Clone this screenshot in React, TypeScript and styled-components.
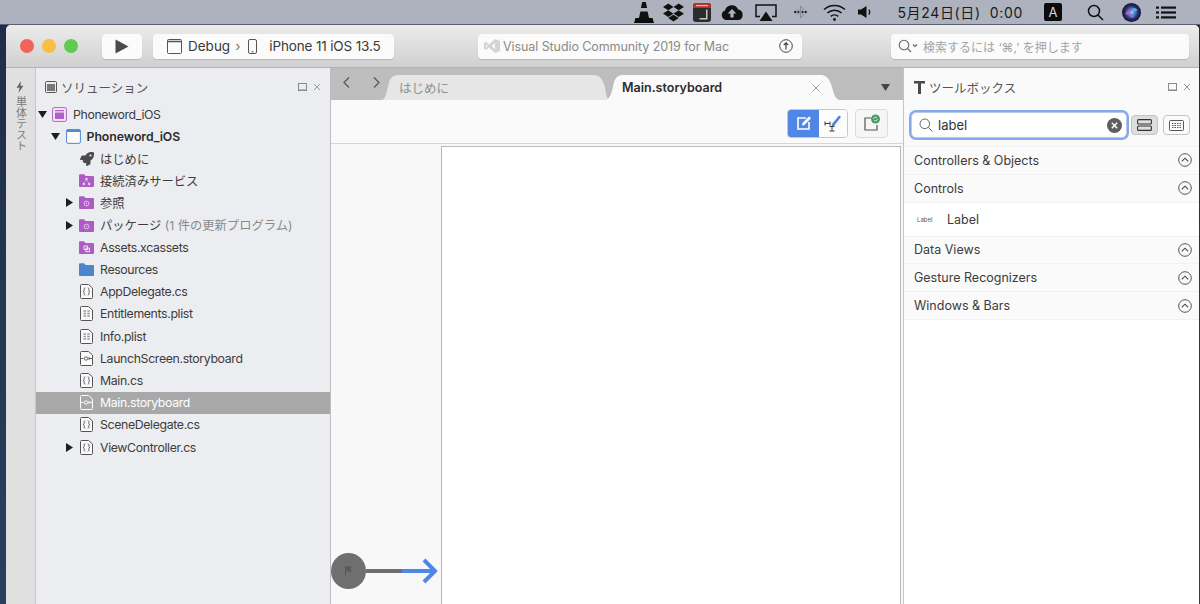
import * as React from 'react';
import styled, { createGlobalStyle } from 'styled-components';
import { FaDropbox, FaRocket } from 'react-icons/fa';

const SANS = `Inter, "Noto Sans CJK JP", "Liberation Sans", sans-serif`;

const Global = createGlobalStyle`
  html, body { margin: 0; padding: 0; height: 604px; overflow: hidden; background: #1f2f4d; }
  * { box-sizing: border-box; }
  #root { height: 604px; }
`;

export default function App() {
  return (
    <>
      <Global />
      <Screen>
        <MenuBar />
        <Desktop>
          <Window>
            <TitleBar />
            <Body>
              <Rail>
                <BoltIcon />
                <RailLabel>単体テスト</RailLabel>
              </Rail>
              <SolutionPanel />
              <EditorPane />
              <Toolbox />
            </Body>
          </Window>
        </Desktop>
      </Screen>
    </>
  );
}

/* ---------- menu bar ---------- */

const MenuBar = () => (
  <MenuStrip>
    <MenuSlot $w={30}><VlcIcon /></MenuSlot>
    <MenuSlot $w={28}><FaDropbox size={21} color="#111" /></MenuSlot>
    <MenuSlot $w={30}><CalIcon /></MenuSlot>
    <MenuSlot $w={30}><CloudIcon /></MenuSlot>
    <MenuSlot $w={38}><AirplayIcon /></MenuSlot>
    <MenuSlot $w={30}><BluetoothIcon /></MenuSlot>
    <MenuSlot $w={38}><WifiIcon /></MenuSlot>
    <MenuSlot $w={24}><SpeakerIcon /></MenuSlot>
    <Clock>5月24日(日)&nbsp;&nbsp;0:00</Clock>
    <MenuSlot $w={20}><InputBadge>A</InputBadge></MenuSlot>
    <MenuSlot $w={42} $gap={11}><MenuSearch /></MenuSlot>
    <MenuSlot $w={30}><SiriIcon /></MenuSlot>
    <MenuSlot $w={40}><ListIcon /></MenuSlot>
    <MenuEnd />
  </MenuStrip>
);

const MenuStrip = styled.div`
  height: 25px;
  flex: none;
  background: #adb2be;
  display: flex;
  align-items: center;
  justify-content: flex-end;
  border-bottom: 1px solid #5a6070;
`;

const MenuSlot = styled.div<{ $w: number; $gap?: number }>`
  width: ${(p) => p.$w}px;
  margin-left: ${(p) => p.$gap ?? 0}px;
  display: flex;
  align-items: center;
  justify-content: center;
`;

const MenuEnd = styled.div`
  width: 14px;
`;

const Clock = styled.div`
  font: 14px ${SANS};
  letter-spacing: 0.65px;
  color: #1a1a1a;
  margin: 0 20px 0 20px;
  white-space: nowrap;
`;

const InputBadge = styled.div`
  width: 18px;
  height: 18px;
  border-radius: 2px;
  background: #0c0c0e;
  color: #d8d8d8;
  font: 13px/18px ${SANS};
  text-align: center;
`;

const VlcIcon = () => (
  <svg width="20" height="21" viewBox="0 0 20 21">
    <path d="M8.200 0h3.600l1.300 6H6.900z" fill="#111" />
    <path d="M6.400 9.500h7.200l1.200 5.500H5.200z" fill="#111" />
    <path d="M1.500 16h17L20 21H0z" fill="#0c0c0c" />
    <path d="M5.200 15h9.600l.6 2H4.600z" fill="#111" />
  </svg>
);

const CalIcon = () => (
  <svg width="18" height="19" viewBox="0 0 18 19">
    <rect x="0" y="0" width="18" height="19" rx="3" fill="#2c2c2e" />
    <path d="M0 5V3a3 3 0 0 1 3-3h12a3 3 0 0 1 3 3v2z" fill="#b8322e" />
    <rect x="3" y="2" width="12" height="1.200" fill="#e8b8b4" />
    <path d="M13 6.500v8.500H6.500v1.500H14.500V6.500z" fill="#c4c4c4" />
  </svg>
);

const CloudIcon = () => (
  <svg width="24" height="15" viewBox="0 0 24 15">
    <path d="M6 15a5 5 0 0 1-1-9.600A7 7 0 0 1 18.200 4.600 5.300 5.300 0 0 1 18.500 15z" fill="#111" />
    <path d="M12 4l4.400 4.400h-2.800V12.500h-3.200V8.400H7.600z" fill="#adb2be" />
  </svg>
);

const AirplayIcon = () => (
  <svg width="22" height="17" viewBox="0 0 22 17">
    <path d="M5 12.500H1V1h20v11.500H17" fill="none" stroke="#111" strokeWidth="1.500" />
    <path d="M11 7.500l6.500 9.500H4.500z" fill="#111" />
  </svg>
);

const BluetoothIcon = () => (
  <svg width="13" height="16" viewBox="0 0 13 16" fill="none">
    <path d="M3 4.500L9.500 11 6.500 14V2L9.500 5 3 11.500" stroke="#858a96" strokeWidth="1" />
    <circle cx="1.300" cy="8" r="1.200" fill="#222" />
    <circle cx="4.300" cy="8" r="1.100" fill="#222" />
    <circle cx="8.700" cy="8" r="1.100" fill="#222" />
    <circle cx="11.700" cy="8" r="1.200" fill="#222" />
  </svg>
);

const WifiIcon = () => (
  <svg width="23" height="17" viewBox="0 0 23 17" fill="none" stroke="#111" strokeWidth="1.500">
    <path d="M1 5.500a15.500 15.500 0 0 1 21 0" />
    <path d="M4.400 9a10.500 10.500 0 0 1 14.200 0" />
    <path d="M7.800 12.400a5.500 5.500 0 0 1 7.400 0" />
    <circle cx="11.500" cy="15.500" r="1.400" fill="#111" stroke="none" />
  </svg>
);

const SpeakerIcon = () => (
  <svg width="14" height="12" viewBox="0 0 14 12">
    <path d="M0 3.500h3L8.500 0v12L3 8.500H0z" fill="#111" />
    <path d="M10.800 3.500a4 4 0 0 1 0 5" fill="none" stroke="#111" strokeWidth="1.200" />
  </svg>
);

const MenuSearch = () => (
  <svg width="17" height="17" viewBox="0 0 17 17" fill="none" stroke="#111" strokeWidth="1.500">
    <circle cx="7" cy="7" r="5.500" />
    <path d="M11 11l5 5" />
  </svg>
);

const SiriIcon = () => (
  <svg width="19" height="19" viewBox="0 0 19 19">
    <defs>
      <radialGradient id="siri" cx="50%" cy="50%" r="50%">
        <stop offset="0%" stopColor="#b8d8f4" />
        <stop offset="35%" stopColor="#5a78d0" />
        <stop offset="70%" stopColor="#2b2a66" />
        <stop offset="100%" stopColor="#12122a" />
      </radialGradient>
    </defs>
    <circle cx="9.500" cy="9.500" r="9.500" fill="url(#siri)" />
    <path d="M3 11c2-2 3-5 6.500-4-1 3-3 5-6.500 4z" fill="#c05cb8" />
    <path d="M9.500 7c2-3 4-2 6 0-2 2-4 2-6 0z" fill="#46b4dc" />
    <path d="M7 11c2-1 4-1 5 3-2 1-4 0-5-3z" fill="#6d7fe0" />
  </svg>
);

const ListIcon = () => (
  <svg width="20" height="13" viewBox="0 0 20 13" fill="#111">
    <rect x="0" y="0.500" width="3" height="2.200" />
    <rect x="5" y="0.500" width="15" height="2.200" />
    <rect x="0" y="5.400" width="3" height="2.200" />
    <rect x="5" y="5.400" width="15" height="2.200" />
    <rect x="0" y="10.300" width="3" height="2.200" />
    <rect x="5" y="10.300" width="15" height="2.200" />
  </svg>
);

/* ---------- window ---------- */

const Screen = styled.div`
  height: 604px;
  display: flex;
  flex-direction: column;
  background: linear-gradient(180deg, #1d2c4a, #2c3e5e);
`;

const Desktop = styled.div`
  flex: 1;
  min-height: 0;
  display: flex;
  padding: 0 1px 0 6px;
`;

const Window = styled.div`
  flex: 1;
  min-width: 0;
  display: flex;
  flex-direction: column;
  border-radius: 5px 5px 0 0;
  overflow: hidden;
  background: #fafafa;
`;

const Body = styled.div`
  flex: 1;
  min-height: 0;
  display: flex;
`;

const TitleBar = () => (
  <TitleStrip>
    <Lights>
      <Light $c="#f1645a" />
      <Light $c="#f8bd45" />
      <Light $c="#5fc952" />
    </Lights>
    <PlayButton>
      <svg width="14" height="15" viewBox="0 0 14 15">
        <path d="M0.500 0.500L13.500 7.500 0.500 14.500z" fill="#4a4a4a" />
      </svg>
    </PlayButton>
    <RunTarget>
      <svg width="15" height="15" viewBox="0 0 15 15" fill="none" stroke="#555" strokeWidth="1">
        <rect x="0.500" y="0.500" width="14" height="14" rx="1" />
        <path d="M0.500 2.500h14" strokeWidth="1.600" />
      </svg>
      <span>Debug</span>
      <Crumb>›</Crumb>
      <svg width="9" height="15" viewBox="0 0 9 15" fill="none" stroke="#555" strokeWidth="1">
        <rect x="0.500" y="0.500" width="8" height="14" rx="1.500" />
        <path d="M3.500 12.800h2" />
      </svg>
      <DeviceName>iPhone 11 iOS 13.5</DeviceName>
    </RunTarget>
    <StatusBox>
      <svg width="16" height="14" viewBox="0 0 16 14" fill="#d4d4d4">
        <path d="M11 0l5 2v10l-5 2-6-5.500L2 11 0 10V4l2-1 3 2.500zM2 5.200v3.600L3.700 7zM11 4L7.500 7l3.500 3z" />
      </svg>
      <StatusText>Visual Studio Community 2019 for Mac</StatusText>
      <svg width="14" height="14" viewBox="0 0 14 14" fill="none" stroke="#444" strokeWidth="1">
        <circle cx="7" cy="7" r="6.300" />
        <path d="M7 10.500V4M4.800 6L7 3.800 9.200 6" strokeWidth="1.200" />
      </svg>
    </StatusBox>
    <GlobalSearch>
      <svg width="20" height="14" viewBox="0 0 20 14" fill="none" stroke="#666" strokeWidth="1.100">
        <circle cx="6" cy="6" r="4.800" />
        <path d="M9.500 9.500l3.500 3.500M15 5.500l2 2 2-2" />
      </svg>
      <span>検索するには ‘⌘,’ を押します</span>
    </GlobalSearch>
  </TitleStrip>
);

const TitleStrip = styled.div`
  height: 43px;
  flex: none;
  display: flex;
  align-items: center;
  padding: 0 10px 0 14px;
  background: linear-gradient(180deg, #ececec, #d0d0d0);
  border-bottom: 1px solid #b4b4b4;
`;

const Lights = styled.div`
  display: flex;
  gap: 8px;
  margin-right: 24px;
`;

const Light = styled.div<{ $c: string }>`
  width: 14px;
  height: 14px;
  border-radius: 50%;
  background: ${(p) => p.$c};
`;

const ToolButton = styled.div`
  height: 25px;
  background: #fbfbfb;
  border-radius: 4px;
  box-shadow: 0 1px 1px rgba(0, 0, 0, 0.14);
  display: flex;
  align-items: center;
`;

const PlayButton = styled(ToolButton)`
  width: 40px;
  justify-content: center;
  margin-right: 11px;
`;

const RunTarget = styled(ToolButton)`
  width: 241px;
  padding-left: 14px;
  gap: 6px;
  font: 13.500px ${SANS};
  color: #3a3a3a;
  margin-right: 84px;
`;

const Crumb = styled.span`
  color: #777;
  margin: 0 2px 0 -1px;
`;

const DeviceName = styled.span`
  margin-left: 6px;
  letter-spacing: -0.15px;
`;

const StatusBox = styled(ToolButton)`
  width: 324px;
  padding: 0 9px 0 6px;
  gap: 3px;
  margin-right: 89px;
`;

const StatusText = styled.span`
  flex: 1;
  font: 12.500px ${SANS};
  letter-spacing: -0.08px;
  color: #8a8a8a;
  white-space: nowrap;
`;

const GlobalSearch = styled(ToolButton)`
  width: 298px;
  padding-left: 7px;
  gap: 5px;
  font: 12px ${SANS};
  color: #a4a4a4;
`;

const Rail = styled.div`
  width: 30px;
  flex: none;
  background: #e0e0e0;
  border-right: 1px solid #c6c6c6;
  display: flex;
  flex-direction: column;
  align-items: center;
  padding: 13px 1px 0 0;
  gap: 3px;
`;

const RailLabel = styled.div`
  writing-mode: vertical-rl;
  font: 11px/13px ${SANS};
  color: #7a7a7a;
`;

const BoltIcon = () => (
  <svg width="8" height="12" viewBox="0 0 8 12">
    <path d="M5 0L0.500 6.800H3.500L2.500 12 7.500 4.800H4.500z" fill="#666" />
  </svg>
);

/* ---------- solution panel ---------- */

type FileKind = 'code' | 'plist' | 'board' | 'boardSel';
type RowIcon = 'solution' | 'project' | 'rocket' | 'service' | 'ref' | 'assets' | 'blue' | FileKind;

type TreeRow = {
  label: string;
  note?: string;
  level: number;
  icon: RowIcon;
  arrow?: 'open' | 'closed';
  bold?: boolean;
  selected?: boolean;
  cjk?: boolean;
};

const rows: TreeRow[] = [
  { label: 'Phoneword_iOS', level: 0, icon: 'solution', arrow: 'open' },
  { label: 'Phoneword_iOS', level: 1, icon: 'project', arrow: 'open', bold: true },
  { label: 'はじめに', level: 2, icon: 'rocket', cjk: true },
  { label: '接続済みサービス', level: 2, icon: 'service', cjk: true },
  { label: '参照', level: 2, icon: 'ref', arrow: 'closed', cjk: true },
  { label: 'パッケージ', note: ' (1 件の更新プログラム)', level: 2, icon: 'ref', arrow: 'closed', cjk: true },
  { label: 'Assets.xcassets', level: 2, icon: 'assets' },
  { label: 'Resources', level: 2, icon: 'blue' },
  { label: 'AppDelegate.cs', level: 2, icon: 'code' },
  { label: 'Entitlements.plist', level: 2, icon: 'plist' },
  { label: 'Info.plist', level: 2, icon: 'plist' },
  { label: 'LaunchScreen.storyboard', level: 2, icon: 'board' },
  { label: 'Main.cs', level: 2, icon: 'code' },
  { label: 'Main.storyboard', level: 2, icon: 'boardSel', selected: true },
  { label: 'SceneDelegate.cs', level: 2, icon: 'code' },
  { label: 'ViewController.cs', level: 2, icon: 'code', arrow: 'closed' },
];

const SolutionPanel = () => (
  <SidePanel>
    <PanelHead>
      <svg width="12" height="12" viewBox="0 0 12 12">
        <rect x="0.500" y="0.500" width="11" height="11" rx="1" fill="none" stroke="#555" />
        <rect x="2" y="3" width="8" height="7" fill="#777" />
      </svg>
      <PanelTitle>ソリューション</PanelTitle>
      <DockIcons />
    </PanelHead>
    {rows.map((r, i) => (
      <Row key={i} $level={r.level} $selected={r.selected}>
        <Arrow>
          {r.arrow === 'open' && <ArrowOpen />}
          {r.arrow === 'closed' && <ArrowClosed />}
        </Arrow>
        <TreeIcon icon={r.icon} />
        <RowLabel $bold={r.bold} $selected={r.selected} $cjk={r.cjk}>
          {r.label}
          {r.note && <RowNote>{r.note}</RowNote>}
        </RowLabel>
      </Row>
    ))}
  </SidePanel>
);

const SidePanel = styled.div`
  width: 295px;
  flex: none;
  background: #ecedf0;
  border-right: 1px solid #bdbdbd;
  padding-top: 6px;
`;

const PanelHead = styled.div`
  height: 26px;
  display: flex;
  align-items: center;
  padding: 0 9px 0 9px;
  margin-bottom: 3.100px;
`;

const PanelTitle = styled.div`
  flex: 1;
  margin-left: 4px;
  font: 12.500px ${SANS};
  color: #555;
`;

const DockWrap = styled.div`
  display: flex;
  align-items: center;
  gap: 6px;
`;

const DockIcons = () => (
  <DockWrap>
    <svg width="9" height="8" viewBox="0 0 9 8">
      <rect x="0.500" y="0.500" width="8" height="7" fill="none" stroke="#8a8a8a" />
      <path d="M0 7h9" stroke="#8a8a8a" />
    </svg>
    <svg width="8" height="8" viewBox="0 0 8 8" stroke="#9a9a9a" strokeWidth="1">
      <path d="M1 1l6 6M7 1L1 7" />
    </svg>
  </DockWrap>
);

const Row = styled.div<{ $level: number; $selected?: boolean }>`
  height: 22.200px;
  display: flex;
  align-items: center;
  padding-left: ${(p) => p.$level * 13.500}px;
  background: ${(p) => (p.$selected ? '#a8a8a8' : 'transparent')};
`;

const Arrow = styled.div`
  width: 12px;
  height: 10px;
  display: flex;
  align-items: center;
  justify-content: center;
  margin-right: 4px;
`;

const ArrowOpen = () => (
  <svg width="9" height="7" viewBox="0 0 9 7">
    <path d="M0 0h9L4.500 7z" fill="#1e1e1e" />
  </svg>
);

const ArrowClosed = () => (
  <svg width="7" height="9" viewBox="0 0 7 9">
    <path d="M0 0v9l7-4.500z" fill="#1e1e1e" />
  </svg>
);

const RowLabel = styled.div<{ $bold?: boolean; $selected?: boolean; $cjk?: boolean }>`
  margin-left: 6px;
  font: ${(p) => (p.$bold ? 600 : 400)} 12.300px ${SANS};
  letter-spacing: ${(p) => (p.$cjk ? 0 : p.$bold ? -0.05 : -0.35)}px;
  color: ${(p) => (p.$selected ? '#fff' : p.$bold ? '#2c2c2c' : '#3c3c3c')};
  white-space: nowrap;
`;

const RowNote = styled.span`
  color: #8a8a8a;
`;

const IconBox = styled.div`
  width: 15px;
  height: 15px;
  flex: none;
  display: flex;
  align-items: center;
  justify-content: center;
`;

const Folder = ({ fill, children }: { fill: string; children?: React.ReactNode }) => (
  <svg width="15" height="13" viewBox="0 0 15 13">
    <path d="M0 1.200A1 1 0 0 1 1 .2h4l1.600 1.800H14a1 1 0 0 1 1 1V12a1 1 0 0 1-1 1H1a1 1 0 0 1-1-1z" fill={fill} />
    {children}
  </svg>
);

const FileIcon = ({ kind }: { kind: FileKind }) => {
  const c = kind === 'boardSel' ? '#fff' : '#555';
  return (
    <svg width="13" height="15" viewBox="0 0 13 15" fill="none" stroke={c} strokeWidth="1">
      <path d="M1.500 .5h7L12.500 4v9.500a1 1 0 0 1-1 1h-10a1 1 0 0 1-1-1v-12a1 1 0 0 1 1-1z" fill={kind === 'boardSel' ? 'none' : '#fafafa'} />
      {kind === 'code' && (
        <path d="M5.300 3.800c-1.500 0-1.100 1.200-1.100 2.200s-.4 1.500-1.200 1.500c.8 0 1.200.5 1.200 1.500s-.4 2.200 1.100 2.200M7.700 3.800c1.500 0 1.100 1.200 1.100 2.200s.4 1.500 1.200 1.500c-.8 0-1.200.5-1.200 1.500s.4 2.200-1.100 2.200" strokeWidth="0.900" />
      )}
      {kind === 'plist' && (
        <path d="M3.500 5h2.500M7.300 5h2.500M3.500 7.500h2.500M7.300 7.500h2.500M3.500 10h2.500M7.300 10h2.500" stroke="#999" strokeWidth="1.400" />
      )}
      {(kind === 'board' || kind === 'boardSel') && (
        <>
          <path d="M.5 7.500h3M8.500 7.500h4M8.500 6l1.500 1.500L8.500 9" strokeWidth="0.900" />
          <circle cx="6" cy="7.500" r="1.700" strokeWidth="0.900" />
        </>
      )}
    </svg>
  );
};

const TreeIcon = ({ icon }: { icon: RowIcon }) => {
  let inner: React.ReactNode;
  switch (icon) {
    case 'solution':
      inner = (
        <svg width="15" height="15" viewBox="0 0 15 15">
          <rect x="0.600" y="0.600" width="13.800" height="13.800" rx="1.500" fill="#f3eaf5" stroke="#b060c8" />
          <rect x="3" y="5.500" width="9" height="6.500" fill="#b060c8" />
          <rect x="3" y="3" width="9" height="1.300" fill="#b060c8" />
        </svg>
      );
      break;
    case 'project':
      inner = (
        <svg width="15" height="15" viewBox="0 0 15 15">
          <rect x="0.600" y="0.600" width="13.800" height="13.800" rx="1.500" fill="#fbfbfb" stroke="#4f8ad0" />
          <rect x="0.600" y="0.600" width="13.800" height="2.400" fill="#4f8ad0" />
        </svg>
      );
      break;
    case 'rocket':
      inner = <FaRocket size={14} color="#4a4a4a" />;
      break;
    case 'service':
      inner = (
        <Folder fill="#ad5cc4">
          <g fill="#f0dff4" stroke="#f0dff4" strokeWidth="0.400">
            <circle cx="7.500" cy="5" r="1" />
            <circle cx="4.800" cy="10" r="1" />
            <circle cx="10.200" cy="10" r="1" />
            <path d="M7.500 5L4.800 10M7.500 5l2.700 5" />
          </g>
        </Folder>
      );
      break;
    case 'ref':
      inner = (
        <Folder fill="#ad5cc4">
          <circle cx="7.500" cy="7.500" r="2.400" fill="none" stroke="#e0c4e8" strokeWidth="1" />
          <circle cx="7.500" cy="7.500" r="0.700" fill="#e0c4e8" />
        </Folder>
      );
      break;
    case 'assets':
      inner = (
        <Folder fill="#ad5cc4">
          <rect x="5" y="5" width="3.500" height="3.500" fill="none" stroke="#f0dff4" />
          <rect x="7" y="7.200" width="3.500" height="3.500" fill="none" stroke="#f0dff4" />
        </Folder>
      );
      break;
    case 'blue':
      inner = <Folder fill="#4a86c8" />;
      break;
    default:
      inner = <FileIcon kind={icon} />;
  }
  return <IconBox>{inner}</IconBox>;
};

/* ---------- editor ---------- */

const EditorPane = () => (
  <Editor>
    <TabStrip>
      <NavArrows>
        <svg width="7" height="11" viewBox="0 0 7 11" fill="none" stroke="#555" strokeWidth="1.200">
          <path d="M6 .5L1 5.500l5 5" />
        </svg>
        <svg width="7" height="11" viewBox="0 0 7 11" fill="none" stroke="#555" strokeWidth="1.200">
          <path d="M1 .5l5 5-5 5" />
        </svg>
      </NavArrows>
      <InactiveTab>はじめに</InactiveTab>
      <ActiveTab>
        <span>Main.storyboard</span>
        <svg width="8" height="8" viewBox="0 0 8 8" stroke="#999" strokeWidth="1">
          <path d="M.5 .5l7 7M7.500 .5l-7 7" />
        </svg>
      </ActiveTab>
      <TabMenu>
        <svg width="9" height="7" viewBox="0 0 9 7">
          <path d="M0 0h9L4.500 7z" fill="#444" />
        </svg>
      </TabMenu>
    </TabStrip>
    <EditorTools>
      <Segment>
        <SegmentOn>
          <svg width="16" height="16" viewBox="0 0 16 16" fill="none" stroke="#fff" strokeWidth="1.600">
            <path d="M10 3H2v11h11V7" />
            <path d="M6 10.500l.5-2.500L13 1.200l2 2L8.500 10z" fill="#fff" stroke="none" />
          </svg>
        </SegmentOn>
        <SegmentOff>
          <svg width="20" height="18" viewBox="0 0 20 18" fill="none">
            <path d="M9 10L16 1.500l2 1.500L11 12l-2.500 .5z" fill="#4f86d8" />
            <path d="M2 7.500v4M7 7.500v4M2 9.500h5M6.500 12.500h5M6.500 17h5M9 12.500V17" stroke="#3c3c3c" strokeWidth="1" />
          </svg>
        </SegmentOff>
      </Segment>
      <SceneButton>
        <svg width="18" height="18" viewBox="0 0 18 18" fill="none">
          <path d="M8 4H2v12h12v-5" stroke="#555" strokeWidth="1.200" />
          <circle cx="12.500" cy="5" r="4.500" fill="#4b9a68" />
          <path d="M10.500 5a2 2 0 0 1 3.500-1.200M14.500 5a2 2 0 0 1-3.500 1.200" stroke="#e6f2ea" strokeWidth="0.800" />
        </svg>
      </SceneButton>
    </EditorTools>
    <Canvas>
      <Artboard />
      <EntryPoint>
        <EntryDot>
          <svg width="12" height="12" viewBox="0 0 12 12" fill="#595959">
            <path d="M2 1h1v10H2zM3 1.500c2-1 3 .8 6 0L7.500 4 9 6.500c-3 .8-4-1-6 0z" />
          </svg>
        </EntryDot>
        <EntryLine />
        <EntryLineBlue />
        <svg width="18" height="26" viewBox="0 0 18 26" fill="none" stroke="#5087e6" strokeWidth="4">
          <path d="M4 2l11 11L4 24" />
        </svg>
      </EntryPoint>
    </Canvas>
  </Editor>
);

const Editor = styled.div`
  width: 573px;
  flex: none;
  display: flex;
  flex-direction: column;
  border-right: 1px solid #c4c4c4;
`;

const TabStrip = styled.div`
  height: 32px;
  flex: none;
  background: #bdbdbd;
  display: flex;
  align-items: flex-end;
  padding-top: 7px;
`;

const NavArrows = styled.div`
  width: 50px;
  height: 100%;
  display: flex;
  align-items: center;
  justify-content: space-between;
  padding: 0 1px 6px 12px;
  align-self: center;
  margin-top: -5px;
`;

const InactiveTab = styled.div`
  width: 229px;
  height: 25px;
  flex: none;
  background: #e6e6e6;
  clip-path: path('M0 25C4 25 5 20 7 12C8 4 11 0 17 0H213C219 0 222 5 224 12C225 20 226 25 229 25Z');
  display: flex;
  align-items: center;
  padding-left: 18px;
  font: 12.500px ${SANS};
  color: #909090;
`;

const ActiveTab = styled.div`
  width: 235px;
  height: 25px;
  flex: none;
  margin-left: -5px;
  background: #fafafa;
  clip-path: path('M0 25C4 25 6 20 8 12C9 4 12 0 18 0H216C222 0 225 5 227 12C229 20 231 25 235 25Z');
  display: flex;
  align-items: center;
  justify-content: space-between;
  padding: 0 20px 0 17px;
  font: 600 12.500px ${SANS};
  color: #2c2c2c;
`;

const TabMenu = styled.div`
  flex: 1;
  height: 25px;
  display: flex;
  align-items: center;
  justify-content: flex-end;
  padding-right: 13px;
`;

const EditorTools = styled.div`
  height: 44px;
  flex: none;
  background: #fafafa;
  border-bottom: 1px solid #d6d6d6;
  display: flex;
  justify-content: flex-end;
  align-items: center;
  padding: 3px 15px 0 0;
  gap: 7px;
`;

const Segment = styled.div`
  display: flex;
  height: 29px;
  width: 61px;
  border-radius: 4px;
  overflow: hidden;
  border: 1px solid #c8c8c8;
`;

const SegmentOn = styled.div`
  width: 31px;
  background: #5087e6;
  display: flex;
  align-items: center;
  justify-content: center;
`;

const SegmentOff = styled.div`
  flex: 1;
  background: #fcfcfc;
  display: flex;
  align-items: center;
  justify-content: center;
`;

const SceneButton = styled.div`
  width: 33px;
  height: 29px;
  border: 1px solid #dcdcdc;
  border-radius: 4px;
  background: #f6f6f6;
  display: flex;
  align-items: center;
  justify-content: center;
`;

const Canvas = styled.div`
  flex: 1;
  min-height: 0;
  position: relative;
  background: #f8f8f8;
  padding: 2px 2px 0 110px;
  display: flex;
`;

const Artboard = styled.div`
  flex: 1;
  background: #fff;
  border: 1px solid #b8b8b8;
  border-bottom: none;
`;

const EntryPoint = styled.div`
  position: absolute;
  left: 0;
  top: 409px;
  display: flex;
  align-items: center;
`;

const EntryDot = styled.div`
  width: 35px;
  height: 36px;
  border-radius: 50%;
  background: #6f6f6f;
  display: flex;
  align-items: center;
  justify-content: center;
`;

const EntryLine = styled.div`
  width: 36px;
  height: 4px;
  background: #6f6f6f;
`;

const EntryLineBlue = styled.div`
  width: 32px;
  height: 4px;
  background: #5087e6;
  margin-right: -14px;
`;

/* ---------- toolbox ---------- */

const Chevron = () => (
  <svg width="14" height="14" viewBox="0 0 14 14" fill="none" stroke="#444" strokeWidth="0.900">
    <circle cx="7" cy="7" r="6.300" />
    <path d="M3.800 8.300L7 5.200l3.200 3.100" strokeWidth="1.100" />
  </svg>
);

const Toolbox = () => (
  <ToolPanel>
    <ToolHead>
      <svg width="11" height="13" viewBox="0 0 11 13" fill="#4a4a4a">
        <path d="M0 0h11v2.400H7v10.600H4V2.400H0z" />
      </svg>
      <ToolTitle>ツールボックス</ToolTitle>
      <DockIcons />
    </ToolHead>
    <SearchRow>
      <SearchField>
        <svg width="14" height="14" viewBox="0 0 14 14" fill="none" stroke="#666" strokeWidth="1">
          <circle cx="5.800" cy="5.800" r="4.800" />
          <path d="M9.300 9.300L13.500 13.500" />
        </svg>
        <SearchValue>label</SearchValue>
        <svg width="15" height="15" viewBox="0 0 15 15">
          <circle cx="7.500" cy="7.500" r="7.500" fill="#5e5e5e" />
          <path d="M4.800 4.800l5.400 5.400M10.200 4.800l-5.400 5.400" stroke="#fff" strokeWidth="1.500" />
        </svg>
      </SearchField>
      <ViewButton $on>
        <svg width="15" height="12" viewBox="0 0 15 12" fill="none" stroke="#333" strokeWidth="1.100">
          <rect x="0.600" y="0.600" width="13.800" height="4.400" rx="1" />
          <rect x="0.600" y="7" width="13.800" height="4.400" rx="1" />
        </svg>
      </ViewButton>
      <ViewButton>
        <svg width="15" height="11" viewBox="0 0 15 11" fill="none" stroke="#444" strokeWidth="0.900">
          <rect x="0.500" y="0.500" width="14" height="10" rx="1" />
          <path d="M3 3.500h9M3 5.500h9M3 7.500h9" strokeDasharray="1.500 1" />
        </svg>
      </ViewButton>
    </SearchRow>
    <Category>
      <span>Controllers &amp; Objects</span>
      <Chevron />
    </Category>
    <Category>
      <span>Controls</span>
      <Chevron />
    </Category>
    <ToolItem>
      <ItemThumb>Label</ItemThumb>
      <span>Label</span>
    </ToolItem>
    <Category>
      <span>Data Views</span>
      <Chevron />
    </Category>
    <Category>
      <span>Gesture Recognizers</span>
      <Chevron />
    </Category>
    <Category>
      <span>Windows &amp; Bars</span>
      <Chevron />
    </Category>
  </ToolPanel>
);

const ToolPanel = styled.div`
  flex: 1;
  min-width: 0;
  background: #fff;
`;

const ToolHead = styled.div`
  height: 44px;
  background: #fafafa;
  display: flex;
  align-items: center;
  padding: 0 8px 6px 10px;
`;

const ToolTitle = styled(PanelTitle)`
  margin-left: 4px;
`;

const SearchRow = styled.div`
  height: 35px;
  background: #fafafa;
  display: flex;
  align-items: flex-start;
  padding-left: 7px;
  border-bottom: 1px solid #f2f2f2;
`;

const SearchField = styled.div`
  width: 216px;
  height: 26px;
  border-radius: 5px;
  background: #fff;
  border: 1px solid #b8c8e8;
  box-shadow: 0 0 0 2px #86a9ee;
  margin: 0 4px 0 0;
  display: flex;
  align-items: center;
  padding: 0 4px 0 7px;
  gap: 5px;
`;

const SearchValue = styled.div`
  flex: 1;
  font: 13px ${SANS};
  color: #333;
`;

const ViewButton = styled.div<{ $on?: boolean }>`
  width: 27px;
  height: 20px;
  margin: 3px 5px 0 0;
  border-radius: 4px;
  border: 1px solid #c4c4c4;
  background: ${(p) => (p.$on ? '#dedede' : '#fbfbfb')};
  display: flex;
  align-items: center;
  justify-content: center;
`;

const Category = styled.div`
  height: 27.800px;
  background: #fafafa;
  border-bottom: 1px solid #f2f2f2;
  display: flex;
  align-items: center;
  justify-content: space-between;
  padding: 0 7px 0 10px;
  font: 12.500px ${SANS};
  color: #3c3c3c;
`;

const ToolItem = styled.div`
  height: 34px;
  background: #fff;
  border-bottom: 1px solid #f0f0f0;
  display: flex;
  align-items: center;
  padding-left: 13px;
  font: 12.500px ${SANS};
  color: #3c3c3c;
`;

const ItemThumb = styled.div`
  width: 30px;
  font: 6px ${SANS};
  color: #555;
`;
